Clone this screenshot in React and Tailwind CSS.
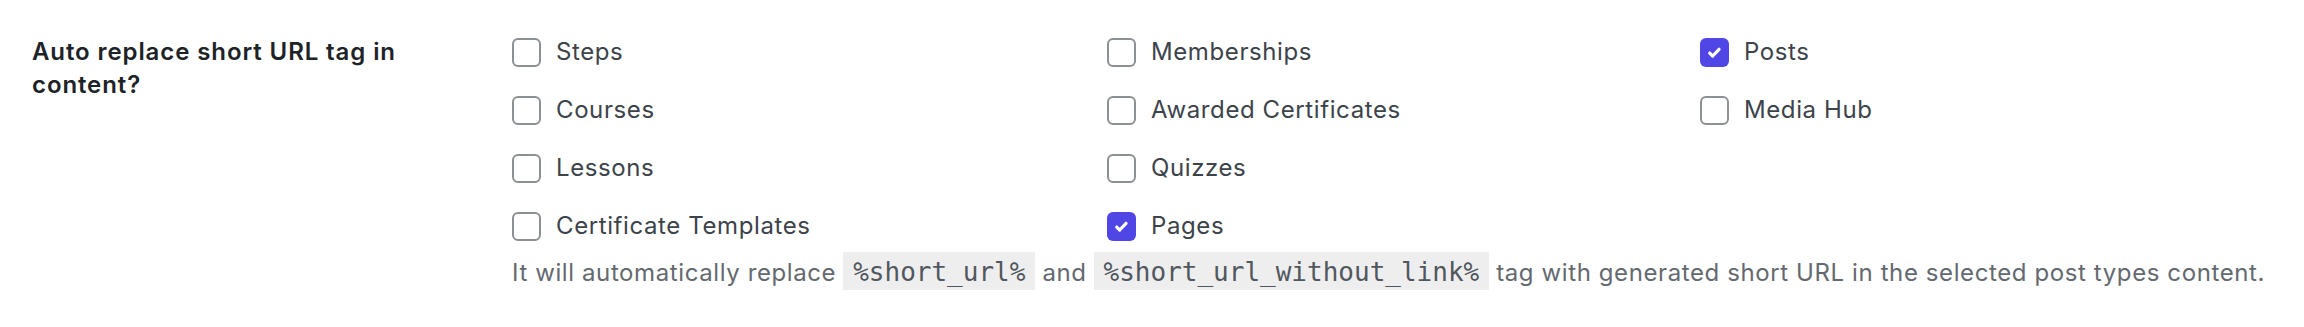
const postTypes = [
  { label: "Steps", checked: false },
  { label: "Memberships", checked: false },
  { label: "Posts", checked: true },
  { label: "Courses", checked: false },
  { label: "Awarded Certificates", checked: false },
  { label: "Media Hub", checked: false },
  { label: "Lessons", checked: false },
  { label: "Quizzes", checked: false },
  null,
  { label: "Certificate Templates", checked: false },
  { label: "Pages", checked: true },
];

const Checkbox = ({ checked }) =>
  checked ? (
    <span className="flex h-[29px] w-[29px] shrink-0 items-center justify-center rounded-[6px] bg-[#4f46e5]">
      <svg width="17" height="17" viewBox="0 0 16 16" fill="none">
        <path d="M3.5 8.5l2.8 2.8 6-6.3" stroke="white" strokeWidth="3" strokeLinecap="round" strokeLinejoin="round" />
      </svg>
    </span>
  ) : (
    <span className="h-[29px] w-[29px] shrink-0 rounded-[6px] border-2 border-[#8c8f94] bg-white" />
  );

const Code = ({ children }) => (
  <code className="mx-[7px] bg-[#eeeeee] px-[10px] py-[5px] font-['DejaVu_Sans_Mono',monospace] text-[26px] tracking-normal text-[#50575e]">
    {children}
  </code>
);

export default function App() {
  return (
    <div className="flex bg-white pl-8 pt-[23px] font-['Inter',sans-serif]">
      {/* Row heading */}
      <div className="w-[480px] shrink-0 pr-[70px] pt-[12px]">
        <h3 className="text-[24px] font-semibold leading-[33px] tracking-[0.9px] text-[#1d2327]">
          Auto replace short URL tag in content?
        </h3>
      </div>

      {/* Options */}
      <div>
        <div className="grid grid-cols-[595px_593px_400px]">
          {postTypes.map((item, i) =>
            item ? (
              <label key={i} className="flex h-[58px] items-center gap-[15px]">
                <Checkbox checked={item.checked} />
                <span className="text-[24px] tracking-[0.6px] text-[#3c434a]">{item.label}</span>
              </label>
            ) : (
              <div key={i} />
            )
          )}
        </div>
        <p className="text-[24px] leading-[34px] tracking-[0.6px] text-[#646970]">
          It will automatically replace<Code>%short_url%</Code>and<Code>%short_url_without_link%</Code>tag with
          generated short URL in the selected post types content.
        </p>
      </div>
    </div>
  );
}
